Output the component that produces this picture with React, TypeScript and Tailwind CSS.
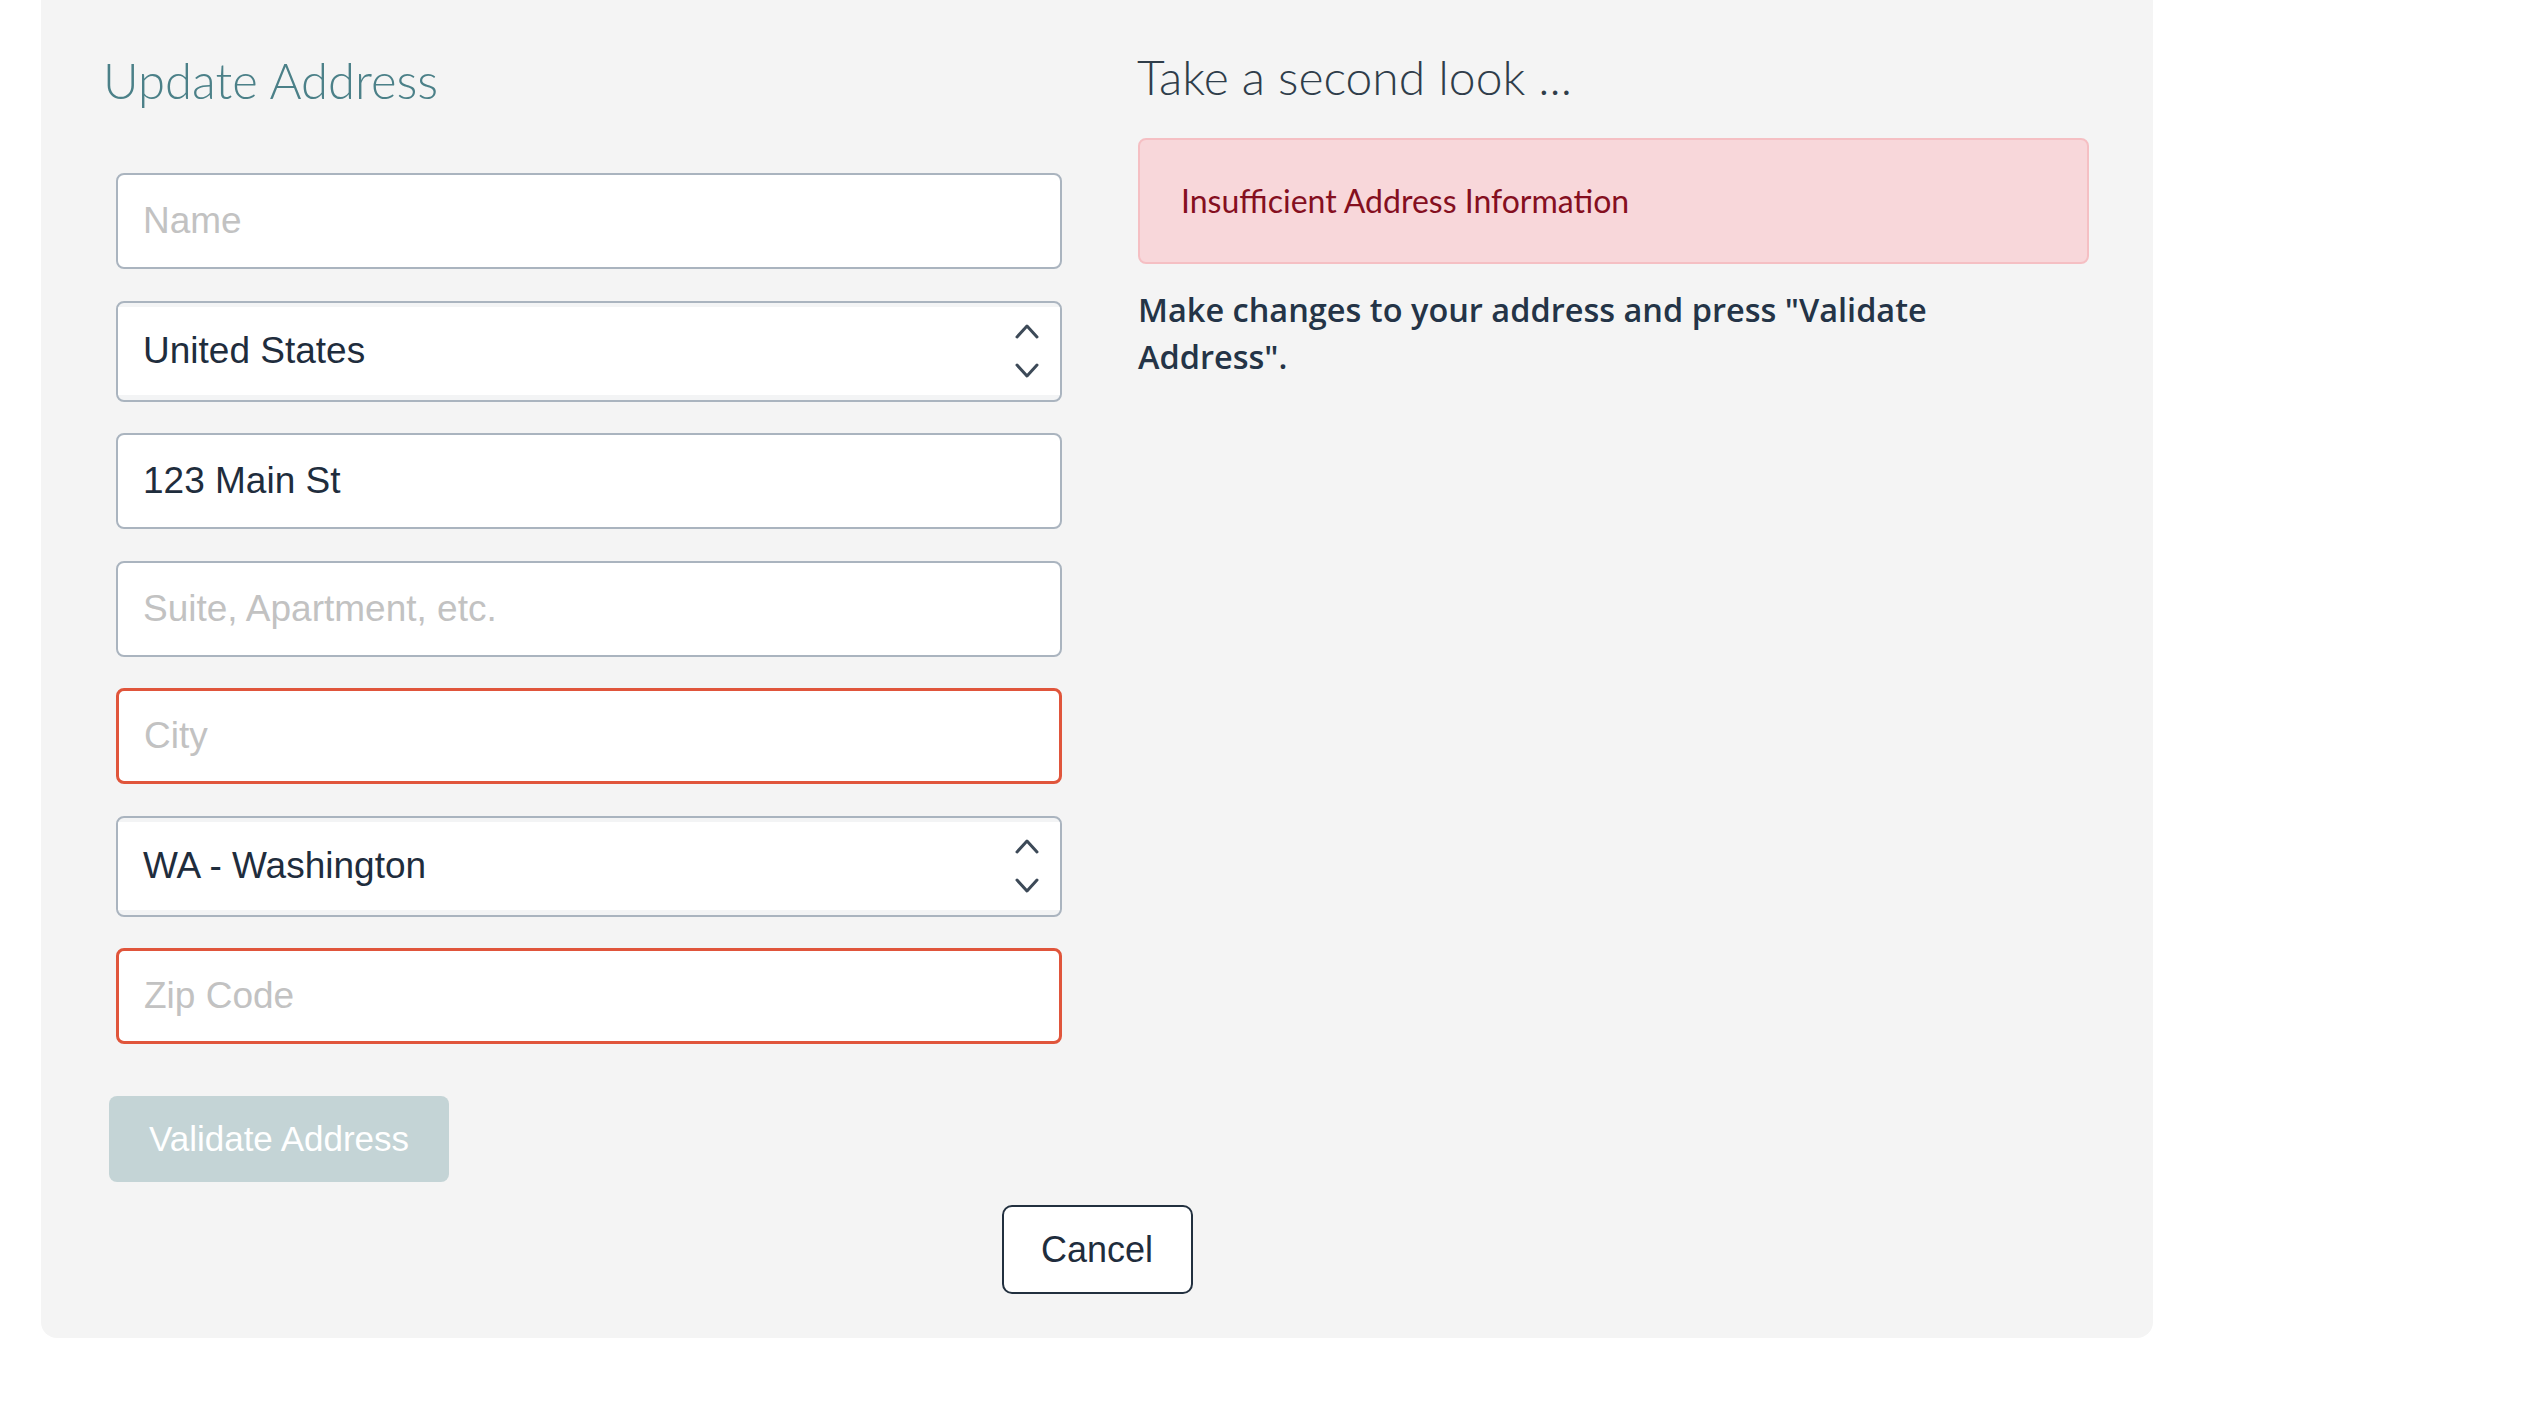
import React from 'react';

const inputBase =
  "w-full h-[96px] rounded-[8px] bg-white px-[25px] text-[37px] text-[#1f2d3d] font-['Liberation_Sans',Arial,sans-serif] placeholder:text-[#c2c2c2] outline-none";

function TextField({ placeholder, value, invalid = false }: { placeholder: string; value?: string; invalid?: boolean }) {
  return (
    <input
      className={`${inputBase} ${invalid ? 'border-[3px] border-[#e0553b]' : 'border-2 border-[#aab4bf]'}`}
      placeholder={placeholder}
      defaultValue={value}
    />
  );
}

function SelectField({ value }: { value: string }) {
  return (
    <div className="h-[101px] rounded-[8px] border-2 border-[#aab4bf] bg-[#f3f4f5] flex flex-col overflow-hidden">
      <div className="flex-1 mt-[4px] mb-[5px] bg-white flex items-center justify-between pl-[25px] pr-[21px]">
        <span className="text-[37px] text-[#1f2d3d] font-['Liberation_Sans',Arial,sans-serif]">{value}</span>
        <svg width="24" height="56" viewBox="0 0 24 56" fill="none" stroke="#3d4a58" strokeWidth="3" strokeLinecap="round" strokeLinejoin="round">
          <polyline points="2,14 12,3 22,14" />
          <polyline points="2,42 12,53 22,42" />
        </svg>
      </div>
    </div>
  );
}

export default function App() {
  return (
    <div className="min-h-screen bg-white">
      <div className="ml-[41px] w-[2112px] bg-[#f4f4f4] rounded-b-[16px] pt-[50px] pb-[44px] px-[64px]">
        <div className="flex gap-[76px]">
          {/* left column: the address form */}
          <div className="w-[957px] flex flex-col">
            <h1 className="-ml-[2px] text-[49px] leading-[60px] font-light text-[#4b8088] font-['Lato',sans-serif]">
              Update Address
            </h1>
            <div className="mt-[63px] ml-[11px] w-[946px] flex flex-col gap-[31.5px]">
              <TextField placeholder="Name" />
              <SelectField value="United States" />
              <TextField placeholder="Street" value="123 Main St" />
              <TextField placeholder="Suite, Apartment, etc." />
              <TextField placeholder="City" invalid />
              <SelectField value="WA - Washington" />
              <TextField placeholder="Zip Code" invalid />
            </div>
            <button
              disabled
              className="mt-[52px] ml-[4px] w-[340px] h-[86px] rounded-[8px] bg-[#c4d4d6] text-white text-[35px] font-['Liberation_Sans',Arial,sans-serif]"
            >
              Validate Address
            </button>
          </div>

          {/* right column: validation feedback */}
          <div className="w-[951px] flex flex-col">
            <h2 className="-mt-[3px] -ml-[1px] text-[48px] leading-[60px] font-light text-[#2f3d4a] font-['Lato',sans-serif]">
              Take a second look ...
            </h2>
            <div className="mt-[31px] h-[126px] rounded-[8px] border-2 border-[#f5bfc3] bg-[#f8d7da] px-[41px] flex items-center">
              <span className="text-[32px] text-[#850f1f] font-['Lato',sans-serif]">Insufficient Address Information</span>
            </div>
            <p className="mt-[22px] w-[880px] text-[32.5px] leading-[47px] font-semibold text-[#243447] font-['Open_Sans',sans-serif]">
              Make changes to your address and press "Validate Address".
            </p>
          </div>
        </div>

        <div className="flex justify-center mt-[23px]">
          <button className="w-[191px] h-[89px] rounded-[10px] border-2 border-[#22303f] bg-white text-[36px] text-[#1f2d3d] font-['Liberation_Sans',Arial,sans-serif]">
            Cancel
          </button>
        </div>
      </div>
    </div>
  );
}
